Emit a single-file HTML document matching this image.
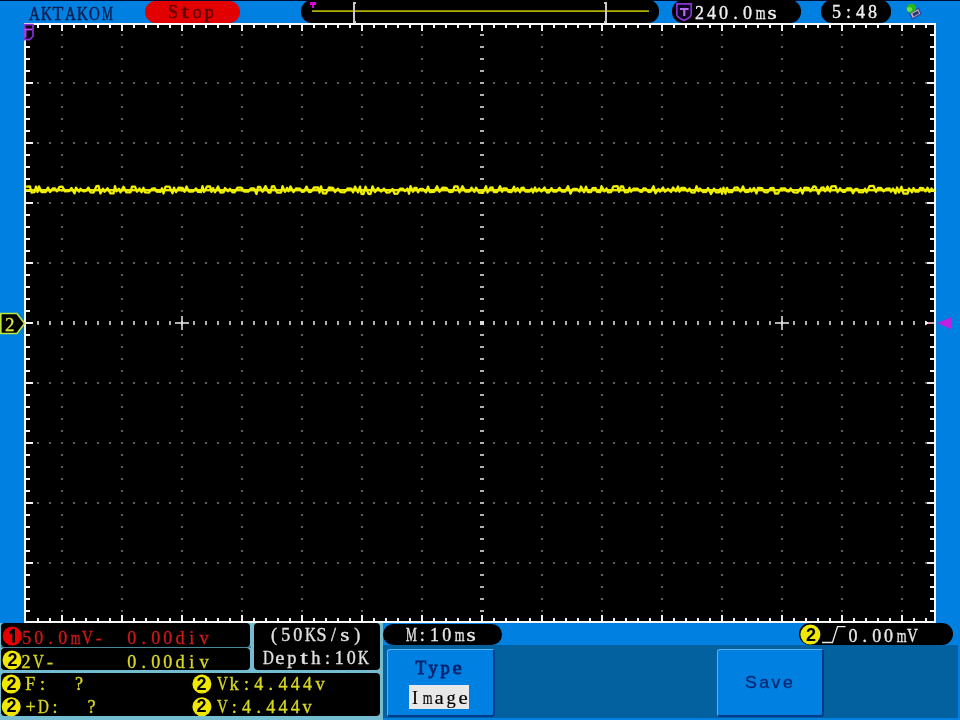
<!DOCTYPE html>
<html><head><meta charset="utf-8">
<style>
html,body{margin:0;padding:0}
body{width:960px;height:720px;overflow:hidden;background:#0080e0;position:relative;font-family:"Liberation Mono",monospace}
.a{position:absolute}
.t{position:absolute;white-space:pre;font-family:"Liberation Mono",monospace;font-size:19px;line-height:19px;letter-spacing:3px;transform:scaleX(0.85);transform-origin:0 0}
.tb{position:absolute;white-space:pre;font-family:"Liberation Mono",monospace;font-weight:bold;font-size:19px;line-height:19px;letter-spacing:0.6px}
.m{position:absolute;white-space:pre}
.m span{display:inline-block;text-align:center}
.pill{position:absolute;background:#000;border-radius:11px}
.box{position:absolute;background:#000;border-radius:4px}
.btn{position:absolute;background:#0080e0;border-top:1px solid #58b4f8;border-left:1px solid #58b4f8;border-right:2px solid #003c8c;border-bottom:2px solid #003c8c;border-radius:3px;box-sizing:border-box}
</style></head><body><div style="position:absolute;left:0;top:0;width:960px;height:720px;filter:blur(0.4px)">
<!-- top dark band -->
<div class="a" style="left:0;top:0;width:960px;height:1px;background:#000a30"></div>


<div class="pill" style="left:145px;top:1px;width:95px;height:22px;background:#e20000"></div>

<div class="pill" style="left:301px;top:0px;width:358px;height:23px"></div>
<svg class="a" style="left:0;top:0" width="960" height="24">
  <rect x="312" y="10.3" width="337" height="1.6" fill="#c0c000"/>
  <rect x="310" y="2" width="6" height="3" fill="#e000e0"/>
  <rect x="312" y="4" width="2" height="4" fill="#e000e0"/>
  <path d="M356 3 L354 3 L354 22 L356 22" stroke="#c8c8c8" stroke-width="2" fill="none"/>
  <path d="M604 3 L606 3 L606 22 L604 22" stroke="#c8c8c8" stroke-width="2" fill="none"/>
</svg>

<div class="pill" style="left:672px;top:0px;width:129px;height:23px"></div>
<svg class="a" style="left:672px;top:0" width="24" height="24">
  <path d="M4.8 3.8 H19.2 V14.5 Q19.2 17.3 12 20.6 Q4.8 17.3 4.8 14.5 Z" stroke="#8a34d8" stroke-width="1.7" fill="#100020"/>
  <rect x="8" y="8" width="8.6" height="2" fill="#b868f0"/>
  <rect x="11.2" y="8" width="2.2" height="8" fill="#b868f0"/>
</svg>

<div class="pill" style="left:821px;top:0px;width:70px;height:23px"></div>

<svg class="a" style="left:900px;top:0" width="30" height="24">
  <path d="M9.8 13.3 L18.5 8.3 L21 14 L12.3 18.8 Z" fill="#d0a8c8" stroke="#2848a0" stroke-width="1.3"/>
  <path d="M12.5 13.6 L17.8 10.8 L19 13.6 L13.6 16.4 Z" fill="#283c70"/>
  <path d="M6.5 8.5 C6.5 4.5 10 3.5 12 3.7 C15 3.9 16.3 6 16 8.5 C15.5 11 13 12 11.2 12.2 L11 14 L9.5 12.5 C7.5 12 6.5 10.5 6.5 8.5 Z" fill="#28b818"/>
  <ellipse cx="9.5" cy="9.3" rx="2.6" ry="2.4" fill="#70dc50"/>
</svg>

<!-- screen -->
<div class="a" style="left:24px;top:23px;width:908px;height:596px;border:2px solid #f8f8f8;background:#000"></div>
<svg class="a" style="left:0;top:0" width="960" height="640">
  <g fill="#5e5e5e"><rect x="61" y="34" width="2" height="2"/><rect x="61" y="46" width="2" height="2"/><rect x="61" y="58" width="2" height="2"/><rect x="61" y="70" width="2" height="2"/><rect x="61" y="82" width="2" height="2"/><rect x="61" y="94" width="2" height="2"/><rect x="61" y="106" width="2" height="2"/><rect x="61" y="118" width="2" height="2"/><rect x="61" y="130" width="2" height="2"/><rect x="61" y="142" width="2" height="2"/><rect x="61" y="154" width="2" height="2"/><rect x="61" y="166" width="2" height="2"/><rect x="61" y="178" width="2" height="2"/><rect x="61" y="190" width="2" height="2"/><rect x="61" y="202" width="2" height="2"/><rect x="61" y="214" width="2" height="2"/><rect x="61" y="226" width="2" height="2"/><rect x="61" y="238" width="2" height="2"/><rect x="61" y="250" width="2" height="2"/><rect x="61" y="262" width="2" height="2"/><rect x="61" y="274" width="2" height="2"/><rect x="61" y="286" width="2" height="2"/><rect x="61" y="298" width="2" height="2"/><rect x="61" y="310" width="2" height="2"/><rect x="61" y="322" width="2" height="2"/><rect x="61" y="334" width="2" height="2"/><rect x="61" y="346" width="2" height="2"/><rect x="61" y="358" width="2" height="2"/><rect x="61" y="370" width="2" height="2"/><rect x="61" y="382" width="2" height="2"/><rect x="61" y="394" width="2" height="2"/><rect x="61" y="406" width="2" height="2"/><rect x="61" y="418" width="2" height="2"/><rect x="61" y="430" width="2" height="2"/><rect x="61" y="442" width="2" height="2"/><rect x="61" y="454" width="2" height="2"/><rect x="61" y="466" width="2" height="2"/><rect x="61" y="478" width="2" height="2"/><rect x="61" y="490" width="2" height="2"/><rect x="61" y="502" width="2" height="2"/><rect x="61" y="514" width="2" height="2"/><rect x="61" y="526" width="2" height="2"/><rect x="61" y="538" width="2" height="2"/><rect x="61" y="550" width="2" height="2"/><rect x="61" y="562" width="2" height="2"/><rect x="61" y="574" width="2" height="2"/><rect x="61" y="586" width="2" height="2"/><rect x="61" y="598" width="2" height="2"/><rect x="61" y="610" width="2" height="2"/><rect x="121" y="34" width="2" height="2"/><rect x="121" y="46" width="2" height="2"/><rect x="121" y="58" width="2" height="2"/><rect x="121" y="70" width="2" height="2"/><rect x="121" y="82" width="2" height="2"/><rect x="121" y="94" width="2" height="2"/><rect x="121" y="106" width="2" height="2"/><rect x="121" y="118" width="2" height="2"/><rect x="121" y="130" width="2" height="2"/><rect x="121" y="142" width="2" height="2"/><rect x="121" y="154" width="2" height="2"/><rect x="121" y="166" width="2" height="2"/><rect x="121" y="178" width="2" height="2"/><rect x="121" y="190" width="2" height="2"/><rect x="121" y="202" width="2" height="2"/><rect x="121" y="214" width="2" height="2"/><rect x="121" y="226" width="2" height="2"/><rect x="121" y="238" width="2" height="2"/><rect x="121" y="250" width="2" height="2"/><rect x="121" y="262" width="2" height="2"/><rect x="121" y="274" width="2" height="2"/><rect x="121" y="286" width="2" height="2"/><rect x="121" y="298" width="2" height="2"/><rect x="121" y="310" width="2" height="2"/><rect x="121" y="322" width="2" height="2"/><rect x="121" y="334" width="2" height="2"/><rect x="121" y="346" width="2" height="2"/><rect x="121" y="358" width="2" height="2"/><rect x="121" y="370" width="2" height="2"/><rect x="121" y="382" width="2" height="2"/><rect x="121" y="394" width="2" height="2"/><rect x="121" y="406" width="2" height="2"/><rect x="121" y="418" width="2" height="2"/><rect x="121" y="430" width="2" height="2"/><rect x="121" y="442" width="2" height="2"/><rect x="121" y="454" width="2" height="2"/><rect x="121" y="466" width="2" height="2"/><rect x="121" y="478" width="2" height="2"/><rect x="121" y="490" width="2" height="2"/><rect x="121" y="502" width="2" height="2"/><rect x="121" y="514" width="2" height="2"/><rect x="121" y="526" width="2" height="2"/><rect x="121" y="538" width="2" height="2"/><rect x="121" y="550" width="2" height="2"/><rect x="121" y="562" width="2" height="2"/><rect x="121" y="574" width="2" height="2"/><rect x="121" y="586" width="2" height="2"/><rect x="121" y="598" width="2" height="2"/><rect x="121" y="610" width="2" height="2"/><rect x="181" y="34" width="2" height="2"/><rect x="181" y="46" width="2" height="2"/><rect x="181" y="58" width="2" height="2"/><rect x="181" y="70" width="2" height="2"/><rect x="181" y="82" width="2" height="2"/><rect x="181" y="94" width="2" height="2"/><rect x="181" y="106" width="2" height="2"/><rect x="181" y="118" width="2" height="2"/><rect x="181" y="130" width="2" height="2"/><rect x="181" y="142" width="2" height="2"/><rect x="181" y="154" width="2" height="2"/><rect x="181" y="166" width="2" height="2"/><rect x="181" y="178" width="2" height="2"/><rect x="181" y="190" width="2" height="2"/><rect x="181" y="202" width="2" height="2"/><rect x="181" y="214" width="2" height="2"/><rect x="181" y="226" width="2" height="2"/><rect x="181" y="238" width="2" height="2"/><rect x="181" y="250" width="2" height="2"/><rect x="181" y="262" width="2" height="2"/><rect x="181" y="274" width="2" height="2"/><rect x="181" y="286" width="2" height="2"/><rect x="181" y="298" width="2" height="2"/><rect x="181" y="310" width="2" height="2"/><rect x="181" y="322" width="2" height="2"/><rect x="181" y="334" width="2" height="2"/><rect x="181" y="346" width="2" height="2"/><rect x="181" y="358" width="2" height="2"/><rect x="181" y="370" width="2" height="2"/><rect x="181" y="382" width="2" height="2"/><rect x="181" y="394" width="2" height="2"/><rect x="181" y="406" width="2" height="2"/><rect x="181" y="418" width="2" height="2"/><rect x="181" y="430" width="2" height="2"/><rect x="181" y="442" width="2" height="2"/><rect x="181" y="454" width="2" height="2"/><rect x="181" y="466" width="2" height="2"/><rect x="181" y="478" width="2" height="2"/><rect x="181" y="490" width="2" height="2"/><rect x="181" y="502" width="2" height="2"/><rect x="181" y="514" width="2" height="2"/><rect x="181" y="526" width="2" height="2"/><rect x="181" y="538" width="2" height="2"/><rect x="181" y="550" width="2" height="2"/><rect x="181" y="562" width="2" height="2"/><rect x="181" y="574" width="2" height="2"/><rect x="181" y="586" width="2" height="2"/><rect x="181" y="598" width="2" height="2"/><rect x="181" y="610" width="2" height="2"/><rect x="241" y="34" width="2" height="2"/><rect x="241" y="46" width="2" height="2"/><rect x="241" y="58" width="2" height="2"/><rect x="241" y="70" width="2" height="2"/><rect x="241" y="82" width="2" height="2"/><rect x="241" y="94" width="2" height="2"/><rect x="241" y="106" width="2" height="2"/><rect x="241" y="118" width="2" height="2"/><rect x="241" y="130" width="2" height="2"/><rect x="241" y="142" width="2" height="2"/><rect x="241" y="154" width="2" height="2"/><rect x="241" y="166" width="2" height="2"/><rect x="241" y="178" width="2" height="2"/><rect x="241" y="190" width="2" height="2"/><rect x="241" y="202" width="2" height="2"/><rect x="241" y="214" width="2" height="2"/><rect x="241" y="226" width="2" height="2"/><rect x="241" y="238" width="2" height="2"/><rect x="241" y="250" width="2" height="2"/><rect x="241" y="262" width="2" height="2"/><rect x="241" y="274" width="2" height="2"/><rect x="241" y="286" width="2" height="2"/><rect x="241" y="298" width="2" height="2"/><rect x="241" y="310" width="2" height="2"/><rect x="241" y="322" width="2" height="2"/><rect x="241" y="334" width="2" height="2"/><rect x="241" y="346" width="2" height="2"/><rect x="241" y="358" width="2" height="2"/><rect x="241" y="370" width="2" height="2"/><rect x="241" y="382" width="2" height="2"/><rect x="241" y="394" width="2" height="2"/><rect x="241" y="406" width="2" height="2"/><rect x="241" y="418" width="2" height="2"/><rect x="241" y="430" width="2" height="2"/><rect x="241" y="442" width="2" height="2"/><rect x="241" y="454" width="2" height="2"/><rect x="241" y="466" width="2" height="2"/><rect x="241" y="478" width="2" height="2"/><rect x="241" y="490" width="2" height="2"/><rect x="241" y="502" width="2" height="2"/><rect x="241" y="514" width="2" height="2"/><rect x="241" y="526" width="2" height="2"/><rect x="241" y="538" width="2" height="2"/><rect x="241" y="550" width="2" height="2"/><rect x="241" y="562" width="2" height="2"/><rect x="241" y="574" width="2" height="2"/><rect x="241" y="586" width="2" height="2"/><rect x="241" y="598" width="2" height="2"/><rect x="241" y="610" width="2" height="2"/><rect x="301" y="34" width="2" height="2"/><rect x="301" y="46" width="2" height="2"/><rect x="301" y="58" width="2" height="2"/><rect x="301" y="70" width="2" height="2"/><rect x="301" y="82" width="2" height="2"/><rect x="301" y="94" width="2" height="2"/><rect x="301" y="106" width="2" height="2"/><rect x="301" y="118" width="2" height="2"/><rect x="301" y="130" width="2" height="2"/><rect x="301" y="142" width="2" height="2"/><rect x="301" y="154" width="2" height="2"/><rect x="301" y="166" width="2" height="2"/><rect x="301" y="178" width="2" height="2"/><rect x="301" y="190" width="2" height="2"/><rect x="301" y="202" width="2" height="2"/><rect x="301" y="214" width="2" height="2"/><rect x="301" y="226" width="2" height="2"/><rect x="301" y="238" width="2" height="2"/><rect x="301" y="250" width="2" height="2"/><rect x="301" y="262" width="2" height="2"/><rect x="301" y="274" width="2" height="2"/><rect x="301" y="286" width="2" height="2"/><rect x="301" y="298" width="2" height="2"/><rect x="301" y="310" width="2" height="2"/><rect x="301" y="322" width="2" height="2"/><rect x="301" y="334" width="2" height="2"/><rect x="301" y="346" width="2" height="2"/><rect x="301" y="358" width="2" height="2"/><rect x="301" y="370" width="2" height="2"/><rect x="301" y="382" width="2" height="2"/><rect x="301" y="394" width="2" height="2"/><rect x="301" y="406" width="2" height="2"/><rect x="301" y="418" width="2" height="2"/><rect x="301" y="430" width="2" height="2"/><rect x="301" y="442" width="2" height="2"/><rect x="301" y="454" width="2" height="2"/><rect x="301" y="466" width="2" height="2"/><rect x="301" y="478" width="2" height="2"/><rect x="301" y="490" width="2" height="2"/><rect x="301" y="502" width="2" height="2"/><rect x="301" y="514" width="2" height="2"/><rect x="301" y="526" width="2" height="2"/><rect x="301" y="538" width="2" height="2"/><rect x="301" y="550" width="2" height="2"/><rect x="301" y="562" width="2" height="2"/><rect x="301" y="574" width="2" height="2"/><rect x="301" y="586" width="2" height="2"/><rect x="301" y="598" width="2" height="2"/><rect x="301" y="610" width="2" height="2"/><rect x="361" y="34" width="2" height="2"/><rect x="361" y="46" width="2" height="2"/><rect x="361" y="58" width="2" height="2"/><rect x="361" y="70" width="2" height="2"/><rect x="361" y="82" width="2" height="2"/><rect x="361" y="94" width="2" height="2"/><rect x="361" y="106" width="2" height="2"/><rect x="361" y="118" width="2" height="2"/><rect x="361" y="130" width="2" height="2"/><rect x="361" y="142" width="2" height="2"/><rect x="361" y="154" width="2" height="2"/><rect x="361" y="166" width="2" height="2"/><rect x="361" y="178" width="2" height="2"/><rect x="361" y="190" width="2" height="2"/><rect x="361" y="202" width="2" height="2"/><rect x="361" y="214" width="2" height="2"/><rect x="361" y="226" width="2" height="2"/><rect x="361" y="238" width="2" height="2"/><rect x="361" y="250" width="2" height="2"/><rect x="361" y="262" width="2" height="2"/><rect x="361" y="274" width="2" height="2"/><rect x="361" y="286" width="2" height="2"/><rect x="361" y="298" width="2" height="2"/><rect x="361" y="310" width="2" height="2"/><rect x="361" y="322" width="2" height="2"/><rect x="361" y="334" width="2" height="2"/><rect x="361" y="346" width="2" height="2"/><rect x="361" y="358" width="2" height="2"/><rect x="361" y="370" width="2" height="2"/><rect x="361" y="382" width="2" height="2"/><rect x="361" y="394" width="2" height="2"/><rect x="361" y="406" width="2" height="2"/><rect x="361" y="418" width="2" height="2"/><rect x="361" y="430" width="2" height="2"/><rect x="361" y="442" width="2" height="2"/><rect x="361" y="454" width="2" height="2"/><rect x="361" y="466" width="2" height="2"/><rect x="361" y="478" width="2" height="2"/><rect x="361" y="490" width="2" height="2"/><rect x="361" y="502" width="2" height="2"/><rect x="361" y="514" width="2" height="2"/><rect x="361" y="526" width="2" height="2"/><rect x="361" y="538" width="2" height="2"/><rect x="361" y="550" width="2" height="2"/><rect x="361" y="562" width="2" height="2"/><rect x="361" y="574" width="2" height="2"/><rect x="361" y="586" width="2" height="2"/><rect x="361" y="598" width="2" height="2"/><rect x="361" y="610" width="2" height="2"/><rect x="421" y="34" width="2" height="2"/><rect x="421" y="46" width="2" height="2"/><rect x="421" y="58" width="2" height="2"/><rect x="421" y="70" width="2" height="2"/><rect x="421" y="82" width="2" height="2"/><rect x="421" y="94" width="2" height="2"/><rect x="421" y="106" width="2" height="2"/><rect x="421" y="118" width="2" height="2"/><rect x="421" y="130" width="2" height="2"/><rect x="421" y="142" width="2" height="2"/><rect x="421" y="154" width="2" height="2"/><rect x="421" y="166" width="2" height="2"/><rect x="421" y="178" width="2" height="2"/><rect x="421" y="190" width="2" height="2"/><rect x="421" y="202" width="2" height="2"/><rect x="421" y="214" width="2" height="2"/><rect x="421" y="226" width="2" height="2"/><rect x="421" y="238" width="2" height="2"/><rect x="421" y="250" width="2" height="2"/><rect x="421" y="262" width="2" height="2"/><rect x="421" y="274" width="2" height="2"/><rect x="421" y="286" width="2" height="2"/><rect x="421" y="298" width="2" height="2"/><rect x="421" y="310" width="2" height="2"/><rect x="421" y="322" width="2" height="2"/><rect x="421" y="334" width="2" height="2"/><rect x="421" y="346" width="2" height="2"/><rect x="421" y="358" width="2" height="2"/><rect x="421" y="370" width="2" height="2"/><rect x="421" y="382" width="2" height="2"/><rect x="421" y="394" width="2" height="2"/><rect x="421" y="406" width="2" height="2"/><rect x="421" y="418" width="2" height="2"/><rect x="421" y="430" width="2" height="2"/><rect x="421" y="442" width="2" height="2"/><rect x="421" y="454" width="2" height="2"/><rect x="421" y="466" width="2" height="2"/><rect x="421" y="478" width="2" height="2"/><rect x="421" y="490" width="2" height="2"/><rect x="421" y="502" width="2" height="2"/><rect x="421" y="514" width="2" height="2"/><rect x="421" y="526" width="2" height="2"/><rect x="421" y="538" width="2" height="2"/><rect x="421" y="550" width="2" height="2"/><rect x="421" y="562" width="2" height="2"/><rect x="421" y="574" width="2" height="2"/><rect x="421" y="586" width="2" height="2"/><rect x="421" y="598" width="2" height="2"/><rect x="421" y="610" width="2" height="2"/><rect x="541" y="34" width="2" height="2"/><rect x="541" y="46" width="2" height="2"/><rect x="541" y="58" width="2" height="2"/><rect x="541" y="70" width="2" height="2"/><rect x="541" y="82" width="2" height="2"/><rect x="541" y="94" width="2" height="2"/><rect x="541" y="106" width="2" height="2"/><rect x="541" y="118" width="2" height="2"/><rect x="541" y="130" width="2" height="2"/><rect x="541" y="142" width="2" height="2"/><rect x="541" y="154" width="2" height="2"/><rect x="541" y="166" width="2" height="2"/><rect x="541" y="178" width="2" height="2"/><rect x="541" y="190" width="2" height="2"/><rect x="541" y="202" width="2" height="2"/><rect x="541" y="214" width="2" height="2"/><rect x="541" y="226" width="2" height="2"/><rect x="541" y="238" width="2" height="2"/><rect x="541" y="250" width="2" height="2"/><rect x="541" y="262" width="2" height="2"/><rect x="541" y="274" width="2" height="2"/><rect x="541" y="286" width="2" height="2"/><rect x="541" y="298" width="2" height="2"/><rect x="541" y="310" width="2" height="2"/><rect x="541" y="322" width="2" height="2"/><rect x="541" y="334" width="2" height="2"/><rect x="541" y="346" width="2" height="2"/><rect x="541" y="358" width="2" height="2"/><rect x="541" y="370" width="2" height="2"/><rect x="541" y="382" width="2" height="2"/><rect x="541" y="394" width="2" height="2"/><rect x="541" y="406" width="2" height="2"/><rect x="541" y="418" width="2" height="2"/><rect x="541" y="430" width="2" height="2"/><rect x="541" y="442" width="2" height="2"/><rect x="541" y="454" width="2" height="2"/><rect x="541" y="466" width="2" height="2"/><rect x="541" y="478" width="2" height="2"/><rect x="541" y="490" width="2" height="2"/><rect x="541" y="502" width="2" height="2"/><rect x="541" y="514" width="2" height="2"/><rect x="541" y="526" width="2" height="2"/><rect x="541" y="538" width="2" height="2"/><rect x="541" y="550" width="2" height="2"/><rect x="541" y="562" width="2" height="2"/><rect x="541" y="574" width="2" height="2"/><rect x="541" y="586" width="2" height="2"/><rect x="541" y="598" width="2" height="2"/><rect x="541" y="610" width="2" height="2"/><rect x="601" y="34" width="2" height="2"/><rect x="601" y="46" width="2" height="2"/><rect x="601" y="58" width="2" height="2"/><rect x="601" y="70" width="2" height="2"/><rect x="601" y="82" width="2" height="2"/><rect x="601" y="94" width="2" height="2"/><rect x="601" y="106" width="2" height="2"/><rect x="601" y="118" width="2" height="2"/><rect x="601" y="130" width="2" height="2"/><rect x="601" y="142" width="2" height="2"/><rect x="601" y="154" width="2" height="2"/><rect x="601" y="166" width="2" height="2"/><rect x="601" y="178" width="2" height="2"/><rect x="601" y="190" width="2" height="2"/><rect x="601" y="202" width="2" height="2"/><rect x="601" y="214" width="2" height="2"/><rect x="601" y="226" width="2" height="2"/><rect x="601" y="238" width="2" height="2"/><rect x="601" y="250" width="2" height="2"/><rect x="601" y="262" width="2" height="2"/><rect x="601" y="274" width="2" height="2"/><rect x="601" y="286" width="2" height="2"/><rect x="601" y="298" width="2" height="2"/><rect x="601" y="310" width="2" height="2"/><rect x="601" y="322" width="2" height="2"/><rect x="601" y="334" width="2" height="2"/><rect x="601" y="346" width="2" height="2"/><rect x="601" y="358" width="2" height="2"/><rect x="601" y="370" width="2" height="2"/><rect x="601" y="382" width="2" height="2"/><rect x="601" y="394" width="2" height="2"/><rect x="601" y="406" width="2" height="2"/><rect x="601" y="418" width="2" height="2"/><rect x="601" y="430" width="2" height="2"/><rect x="601" y="442" width="2" height="2"/><rect x="601" y="454" width="2" height="2"/><rect x="601" y="466" width="2" height="2"/><rect x="601" y="478" width="2" height="2"/><rect x="601" y="490" width="2" height="2"/><rect x="601" y="502" width="2" height="2"/><rect x="601" y="514" width="2" height="2"/><rect x="601" y="526" width="2" height="2"/><rect x="601" y="538" width="2" height="2"/><rect x="601" y="550" width="2" height="2"/><rect x="601" y="562" width="2" height="2"/><rect x="601" y="574" width="2" height="2"/><rect x="601" y="586" width="2" height="2"/><rect x="601" y="598" width="2" height="2"/><rect x="601" y="610" width="2" height="2"/><rect x="661" y="34" width="2" height="2"/><rect x="661" y="46" width="2" height="2"/><rect x="661" y="58" width="2" height="2"/><rect x="661" y="70" width="2" height="2"/><rect x="661" y="82" width="2" height="2"/><rect x="661" y="94" width="2" height="2"/><rect x="661" y="106" width="2" height="2"/><rect x="661" y="118" width="2" height="2"/><rect x="661" y="130" width="2" height="2"/><rect x="661" y="142" width="2" height="2"/><rect x="661" y="154" width="2" height="2"/><rect x="661" y="166" width="2" height="2"/><rect x="661" y="178" width="2" height="2"/><rect x="661" y="190" width="2" height="2"/><rect x="661" y="202" width="2" height="2"/><rect x="661" y="214" width="2" height="2"/><rect x="661" y="226" width="2" height="2"/><rect x="661" y="238" width="2" height="2"/><rect x="661" y="250" width="2" height="2"/><rect x="661" y="262" width="2" height="2"/><rect x="661" y="274" width="2" height="2"/><rect x="661" y="286" width="2" height="2"/><rect x="661" y="298" width="2" height="2"/><rect x="661" y="310" width="2" height="2"/><rect x="661" y="322" width="2" height="2"/><rect x="661" y="334" width="2" height="2"/><rect x="661" y="346" width="2" height="2"/><rect x="661" y="358" width="2" height="2"/><rect x="661" y="370" width="2" height="2"/><rect x="661" y="382" width="2" height="2"/><rect x="661" y="394" width="2" height="2"/><rect x="661" y="406" width="2" height="2"/><rect x="661" y="418" width="2" height="2"/><rect x="661" y="430" width="2" height="2"/><rect x="661" y="442" width="2" height="2"/><rect x="661" y="454" width="2" height="2"/><rect x="661" y="466" width="2" height="2"/><rect x="661" y="478" width="2" height="2"/><rect x="661" y="490" width="2" height="2"/><rect x="661" y="502" width="2" height="2"/><rect x="661" y="514" width="2" height="2"/><rect x="661" y="526" width="2" height="2"/><rect x="661" y="538" width="2" height="2"/><rect x="661" y="550" width="2" height="2"/><rect x="661" y="562" width="2" height="2"/><rect x="661" y="574" width="2" height="2"/><rect x="661" y="586" width="2" height="2"/><rect x="661" y="598" width="2" height="2"/><rect x="661" y="610" width="2" height="2"/><rect x="721" y="34" width="2" height="2"/><rect x="721" y="46" width="2" height="2"/><rect x="721" y="58" width="2" height="2"/><rect x="721" y="70" width="2" height="2"/><rect x="721" y="82" width="2" height="2"/><rect x="721" y="94" width="2" height="2"/><rect x="721" y="106" width="2" height="2"/><rect x="721" y="118" width="2" height="2"/><rect x="721" y="130" width="2" height="2"/><rect x="721" y="142" width="2" height="2"/><rect x="721" y="154" width="2" height="2"/><rect x="721" y="166" width="2" height="2"/><rect x="721" y="178" width="2" height="2"/><rect x="721" y="190" width="2" height="2"/><rect x="721" y="202" width="2" height="2"/><rect x="721" y="214" width="2" height="2"/><rect x="721" y="226" width="2" height="2"/><rect x="721" y="238" width="2" height="2"/><rect x="721" y="250" width="2" height="2"/><rect x="721" y="262" width="2" height="2"/><rect x="721" y="274" width="2" height="2"/><rect x="721" y="286" width="2" height="2"/><rect x="721" y="298" width="2" height="2"/><rect x="721" y="310" width="2" height="2"/><rect x="721" y="322" width="2" height="2"/><rect x="721" y="334" width="2" height="2"/><rect x="721" y="346" width="2" height="2"/><rect x="721" y="358" width="2" height="2"/><rect x="721" y="370" width="2" height="2"/><rect x="721" y="382" width="2" height="2"/><rect x="721" y="394" width="2" height="2"/><rect x="721" y="406" width="2" height="2"/><rect x="721" y="418" width="2" height="2"/><rect x="721" y="430" width="2" height="2"/><rect x="721" y="442" width="2" height="2"/><rect x="721" y="454" width="2" height="2"/><rect x="721" y="466" width="2" height="2"/><rect x="721" y="478" width="2" height="2"/><rect x="721" y="490" width="2" height="2"/><rect x="721" y="502" width="2" height="2"/><rect x="721" y="514" width="2" height="2"/><rect x="721" y="526" width="2" height="2"/><rect x="721" y="538" width="2" height="2"/><rect x="721" y="550" width="2" height="2"/><rect x="721" y="562" width="2" height="2"/><rect x="721" y="574" width="2" height="2"/><rect x="721" y="586" width="2" height="2"/><rect x="721" y="598" width="2" height="2"/><rect x="721" y="610" width="2" height="2"/><rect x="781" y="34" width="2" height="2"/><rect x="781" y="46" width="2" height="2"/><rect x="781" y="58" width="2" height="2"/><rect x="781" y="70" width="2" height="2"/><rect x="781" y="82" width="2" height="2"/><rect x="781" y="94" width="2" height="2"/><rect x="781" y="106" width="2" height="2"/><rect x="781" y="118" width="2" height="2"/><rect x="781" y="130" width="2" height="2"/><rect x="781" y="142" width="2" height="2"/><rect x="781" y="154" width="2" height="2"/><rect x="781" y="166" width="2" height="2"/><rect x="781" y="178" width="2" height="2"/><rect x="781" y="190" width="2" height="2"/><rect x="781" y="202" width="2" height="2"/><rect x="781" y="214" width="2" height="2"/><rect x="781" y="226" width="2" height="2"/><rect x="781" y="238" width="2" height="2"/><rect x="781" y="250" width="2" height="2"/><rect x="781" y="262" width="2" height="2"/><rect x="781" y="274" width="2" height="2"/><rect x="781" y="286" width="2" height="2"/><rect x="781" y="298" width="2" height="2"/><rect x="781" y="310" width="2" height="2"/><rect x="781" y="322" width="2" height="2"/><rect x="781" y="334" width="2" height="2"/><rect x="781" y="346" width="2" height="2"/><rect x="781" y="358" width="2" height="2"/><rect x="781" y="370" width="2" height="2"/><rect x="781" y="382" width="2" height="2"/><rect x="781" y="394" width="2" height="2"/><rect x="781" y="406" width="2" height="2"/><rect x="781" y="418" width="2" height="2"/><rect x="781" y="430" width="2" height="2"/><rect x="781" y="442" width="2" height="2"/><rect x="781" y="454" width="2" height="2"/><rect x="781" y="466" width="2" height="2"/><rect x="781" y="478" width="2" height="2"/><rect x="781" y="490" width="2" height="2"/><rect x="781" y="502" width="2" height="2"/><rect x="781" y="514" width="2" height="2"/><rect x="781" y="526" width="2" height="2"/><rect x="781" y="538" width="2" height="2"/><rect x="781" y="550" width="2" height="2"/><rect x="781" y="562" width="2" height="2"/><rect x="781" y="574" width="2" height="2"/><rect x="781" y="586" width="2" height="2"/><rect x="781" y="598" width="2" height="2"/><rect x="781" y="610" width="2" height="2"/><rect x="841" y="34" width="2" height="2"/><rect x="841" y="46" width="2" height="2"/><rect x="841" y="58" width="2" height="2"/><rect x="841" y="70" width="2" height="2"/><rect x="841" y="82" width="2" height="2"/><rect x="841" y="94" width="2" height="2"/><rect x="841" y="106" width="2" height="2"/><rect x="841" y="118" width="2" height="2"/><rect x="841" y="130" width="2" height="2"/><rect x="841" y="142" width="2" height="2"/><rect x="841" y="154" width="2" height="2"/><rect x="841" y="166" width="2" height="2"/><rect x="841" y="178" width="2" height="2"/><rect x="841" y="190" width="2" height="2"/><rect x="841" y="202" width="2" height="2"/><rect x="841" y="214" width="2" height="2"/><rect x="841" y="226" width="2" height="2"/><rect x="841" y="238" width="2" height="2"/><rect x="841" y="250" width="2" height="2"/><rect x="841" y="262" width="2" height="2"/><rect x="841" y="274" width="2" height="2"/><rect x="841" y="286" width="2" height="2"/><rect x="841" y="298" width="2" height="2"/><rect x="841" y="310" width="2" height="2"/><rect x="841" y="322" width="2" height="2"/><rect x="841" y="334" width="2" height="2"/><rect x="841" y="346" width="2" height="2"/><rect x="841" y="358" width="2" height="2"/><rect x="841" y="370" width="2" height="2"/><rect x="841" y="382" width="2" height="2"/><rect x="841" y="394" width="2" height="2"/><rect x="841" y="406" width="2" height="2"/><rect x="841" y="418" width="2" height="2"/><rect x="841" y="430" width="2" height="2"/><rect x="841" y="442" width="2" height="2"/><rect x="841" y="454" width="2" height="2"/><rect x="841" y="466" width="2" height="2"/><rect x="841" y="478" width="2" height="2"/><rect x="841" y="490" width="2" height="2"/><rect x="841" y="502" width="2" height="2"/><rect x="841" y="514" width="2" height="2"/><rect x="841" y="526" width="2" height="2"/><rect x="841" y="538" width="2" height="2"/><rect x="841" y="550" width="2" height="2"/><rect x="841" y="562" width="2" height="2"/><rect x="841" y="574" width="2" height="2"/><rect x="841" y="586" width="2" height="2"/><rect x="841" y="598" width="2" height="2"/><rect x="841" y="610" width="2" height="2"/><rect x="901" y="34" width="2" height="2"/><rect x="901" y="46" width="2" height="2"/><rect x="901" y="58" width="2" height="2"/><rect x="901" y="70" width="2" height="2"/><rect x="901" y="82" width="2" height="2"/><rect x="901" y="94" width="2" height="2"/><rect x="901" y="106" width="2" height="2"/><rect x="901" y="118" width="2" height="2"/><rect x="901" y="130" width="2" height="2"/><rect x="901" y="142" width="2" height="2"/><rect x="901" y="154" width="2" height="2"/><rect x="901" y="166" width="2" height="2"/><rect x="901" y="178" width="2" height="2"/><rect x="901" y="190" width="2" height="2"/><rect x="901" y="202" width="2" height="2"/><rect x="901" y="214" width="2" height="2"/><rect x="901" y="226" width="2" height="2"/><rect x="901" y="238" width="2" height="2"/><rect x="901" y="250" width="2" height="2"/><rect x="901" y="262" width="2" height="2"/><rect x="901" y="274" width="2" height="2"/><rect x="901" y="286" width="2" height="2"/><rect x="901" y="298" width="2" height="2"/><rect x="901" y="310" width="2" height="2"/><rect x="901" y="322" width="2" height="2"/><rect x="901" y="334" width="2" height="2"/><rect x="901" y="346" width="2" height="2"/><rect x="901" y="358" width="2" height="2"/><rect x="901" y="370" width="2" height="2"/><rect x="901" y="382" width="2" height="2"/><rect x="901" y="394" width="2" height="2"/><rect x="901" y="406" width="2" height="2"/><rect x="901" y="418" width="2" height="2"/><rect x="901" y="430" width="2" height="2"/><rect x="901" y="442" width="2" height="2"/><rect x="901" y="454" width="2" height="2"/><rect x="901" y="466" width="2" height="2"/><rect x="901" y="478" width="2" height="2"/><rect x="901" y="490" width="2" height="2"/><rect x="901" y="502" width="2" height="2"/><rect x="901" y="514" width="2" height="2"/><rect x="901" y="526" width="2" height="2"/><rect x="901" y="538" width="2" height="2"/><rect x="901" y="550" width="2" height="2"/><rect x="901" y="562" width="2" height="2"/><rect x="901" y="574" width="2" height="2"/><rect x="901" y="586" width="2" height="2"/><rect x="901" y="598" width="2" height="2"/><rect x="901" y="610" width="2" height="2"/><rect x="37" y="82" width="2" height="2"/><rect x="49" y="82" width="2" height="2"/><rect x="73" y="82" width="2" height="2"/><rect x="85" y="82" width="2" height="2"/><rect x="97" y="82" width="2" height="2"/><rect x="109" y="82" width="2" height="2"/><rect x="133" y="82" width="2" height="2"/><rect x="145" y="82" width="2" height="2"/><rect x="157" y="82" width="2" height="2"/><rect x="169" y="82" width="2" height="2"/><rect x="193" y="82" width="2" height="2"/><rect x="205" y="82" width="2" height="2"/><rect x="217" y="82" width="2" height="2"/><rect x="229" y="82" width="2" height="2"/><rect x="253" y="82" width="2" height="2"/><rect x="265" y="82" width="2" height="2"/><rect x="277" y="82" width="2" height="2"/><rect x="289" y="82" width="2" height="2"/><rect x="313" y="82" width="2" height="2"/><rect x="325" y="82" width="2" height="2"/><rect x="337" y="82" width="2" height="2"/><rect x="349" y="82" width="2" height="2"/><rect x="373" y="82" width="2" height="2"/><rect x="385" y="82" width="2" height="2"/><rect x="397" y="82" width="2" height="2"/><rect x="409" y="82" width="2" height="2"/><rect x="433" y="82" width="2" height="2"/><rect x="445" y="82" width="2" height="2"/><rect x="457" y="82" width="2" height="2"/><rect x="469" y="82" width="2" height="2"/><rect x="493" y="82" width="2" height="2"/><rect x="505" y="82" width="2" height="2"/><rect x="517" y="82" width="2" height="2"/><rect x="529" y="82" width="2" height="2"/><rect x="553" y="82" width="2" height="2"/><rect x="565" y="82" width="2" height="2"/><rect x="577" y="82" width="2" height="2"/><rect x="589" y="82" width="2" height="2"/><rect x="613" y="82" width="2" height="2"/><rect x="625" y="82" width="2" height="2"/><rect x="637" y="82" width="2" height="2"/><rect x="649" y="82" width="2" height="2"/><rect x="673" y="82" width="2" height="2"/><rect x="685" y="82" width="2" height="2"/><rect x="697" y="82" width="2" height="2"/><rect x="709" y="82" width="2" height="2"/><rect x="733" y="82" width="2" height="2"/><rect x="745" y="82" width="2" height="2"/><rect x="757" y="82" width="2" height="2"/><rect x="769" y="82" width="2" height="2"/><rect x="793" y="82" width="2" height="2"/><rect x="805" y="82" width="2" height="2"/><rect x="817" y="82" width="2" height="2"/><rect x="829" y="82" width="2" height="2"/><rect x="853" y="82" width="2" height="2"/><rect x="865" y="82" width="2" height="2"/><rect x="877" y="82" width="2" height="2"/><rect x="889" y="82" width="2" height="2"/><rect x="913" y="82" width="2" height="2"/><rect x="925" y="82" width="2" height="2"/><rect x="37" y="142" width="2" height="2"/><rect x="49" y="142" width="2" height="2"/><rect x="73" y="142" width="2" height="2"/><rect x="85" y="142" width="2" height="2"/><rect x="97" y="142" width="2" height="2"/><rect x="109" y="142" width="2" height="2"/><rect x="133" y="142" width="2" height="2"/><rect x="145" y="142" width="2" height="2"/><rect x="157" y="142" width="2" height="2"/><rect x="169" y="142" width="2" height="2"/><rect x="193" y="142" width="2" height="2"/><rect x="205" y="142" width="2" height="2"/><rect x="217" y="142" width="2" height="2"/><rect x="229" y="142" width="2" height="2"/><rect x="253" y="142" width="2" height="2"/><rect x="265" y="142" width="2" height="2"/><rect x="277" y="142" width="2" height="2"/><rect x="289" y="142" width="2" height="2"/><rect x="313" y="142" width="2" height="2"/><rect x="325" y="142" width="2" height="2"/><rect x="337" y="142" width="2" height="2"/><rect x="349" y="142" width="2" height="2"/><rect x="373" y="142" width="2" height="2"/><rect x="385" y="142" width="2" height="2"/><rect x="397" y="142" width="2" height="2"/><rect x="409" y="142" width="2" height="2"/><rect x="433" y="142" width="2" height="2"/><rect x="445" y="142" width="2" height="2"/><rect x="457" y="142" width="2" height="2"/><rect x="469" y="142" width="2" height="2"/><rect x="493" y="142" width="2" height="2"/><rect x="505" y="142" width="2" height="2"/><rect x="517" y="142" width="2" height="2"/><rect x="529" y="142" width="2" height="2"/><rect x="553" y="142" width="2" height="2"/><rect x="565" y="142" width="2" height="2"/><rect x="577" y="142" width="2" height="2"/><rect x="589" y="142" width="2" height="2"/><rect x="613" y="142" width="2" height="2"/><rect x="625" y="142" width="2" height="2"/><rect x="637" y="142" width="2" height="2"/><rect x="649" y="142" width="2" height="2"/><rect x="673" y="142" width="2" height="2"/><rect x="685" y="142" width="2" height="2"/><rect x="697" y="142" width="2" height="2"/><rect x="709" y="142" width="2" height="2"/><rect x="733" y="142" width="2" height="2"/><rect x="745" y="142" width="2" height="2"/><rect x="757" y="142" width="2" height="2"/><rect x="769" y="142" width="2" height="2"/><rect x="793" y="142" width="2" height="2"/><rect x="805" y="142" width="2" height="2"/><rect x="817" y="142" width="2" height="2"/><rect x="829" y="142" width="2" height="2"/><rect x="853" y="142" width="2" height="2"/><rect x="865" y="142" width="2" height="2"/><rect x="877" y="142" width="2" height="2"/><rect x="889" y="142" width="2" height="2"/><rect x="913" y="142" width="2" height="2"/><rect x="925" y="142" width="2" height="2"/><rect x="37" y="202" width="2" height="2"/><rect x="49" y="202" width="2" height="2"/><rect x="73" y="202" width="2" height="2"/><rect x="85" y="202" width="2" height="2"/><rect x="97" y="202" width="2" height="2"/><rect x="109" y="202" width="2" height="2"/><rect x="133" y="202" width="2" height="2"/><rect x="145" y="202" width="2" height="2"/><rect x="157" y="202" width="2" height="2"/><rect x="169" y="202" width="2" height="2"/><rect x="193" y="202" width="2" height="2"/><rect x="205" y="202" width="2" height="2"/><rect x="217" y="202" width="2" height="2"/><rect x="229" y="202" width="2" height="2"/><rect x="253" y="202" width="2" height="2"/><rect x="265" y="202" width="2" height="2"/><rect x="277" y="202" width="2" height="2"/><rect x="289" y="202" width="2" height="2"/><rect x="313" y="202" width="2" height="2"/><rect x="325" y="202" width="2" height="2"/><rect x="337" y="202" width="2" height="2"/><rect x="349" y="202" width="2" height="2"/><rect x="373" y="202" width="2" height="2"/><rect x="385" y="202" width="2" height="2"/><rect x="397" y="202" width="2" height="2"/><rect x="409" y="202" width="2" height="2"/><rect x="433" y="202" width="2" height="2"/><rect x="445" y="202" width="2" height="2"/><rect x="457" y="202" width="2" height="2"/><rect x="469" y="202" width="2" height="2"/><rect x="493" y="202" width="2" height="2"/><rect x="505" y="202" width="2" height="2"/><rect x="517" y="202" width="2" height="2"/><rect x="529" y="202" width="2" height="2"/><rect x="553" y="202" width="2" height="2"/><rect x="565" y="202" width="2" height="2"/><rect x="577" y="202" width="2" height="2"/><rect x="589" y="202" width="2" height="2"/><rect x="613" y="202" width="2" height="2"/><rect x="625" y="202" width="2" height="2"/><rect x="637" y="202" width="2" height="2"/><rect x="649" y="202" width="2" height="2"/><rect x="673" y="202" width="2" height="2"/><rect x="685" y="202" width="2" height="2"/><rect x="697" y="202" width="2" height="2"/><rect x="709" y="202" width="2" height="2"/><rect x="733" y="202" width="2" height="2"/><rect x="745" y="202" width="2" height="2"/><rect x="757" y="202" width="2" height="2"/><rect x="769" y="202" width="2" height="2"/><rect x="793" y="202" width="2" height="2"/><rect x="805" y="202" width="2" height="2"/><rect x="817" y="202" width="2" height="2"/><rect x="829" y="202" width="2" height="2"/><rect x="853" y="202" width="2" height="2"/><rect x="865" y="202" width="2" height="2"/><rect x="877" y="202" width="2" height="2"/><rect x="889" y="202" width="2" height="2"/><rect x="913" y="202" width="2" height="2"/><rect x="925" y="202" width="2" height="2"/><rect x="37" y="262" width="2" height="2"/><rect x="49" y="262" width="2" height="2"/><rect x="73" y="262" width="2" height="2"/><rect x="85" y="262" width="2" height="2"/><rect x="97" y="262" width="2" height="2"/><rect x="109" y="262" width="2" height="2"/><rect x="133" y="262" width="2" height="2"/><rect x="145" y="262" width="2" height="2"/><rect x="157" y="262" width="2" height="2"/><rect x="169" y="262" width="2" height="2"/><rect x="193" y="262" width="2" height="2"/><rect x="205" y="262" width="2" height="2"/><rect x="217" y="262" width="2" height="2"/><rect x="229" y="262" width="2" height="2"/><rect x="253" y="262" width="2" height="2"/><rect x="265" y="262" width="2" height="2"/><rect x="277" y="262" width="2" height="2"/><rect x="289" y="262" width="2" height="2"/><rect x="313" y="262" width="2" height="2"/><rect x="325" y="262" width="2" height="2"/><rect x="337" y="262" width="2" height="2"/><rect x="349" y="262" width="2" height="2"/><rect x="373" y="262" width="2" height="2"/><rect x="385" y="262" width="2" height="2"/><rect x="397" y="262" width="2" height="2"/><rect x="409" y="262" width="2" height="2"/><rect x="433" y="262" width="2" height="2"/><rect x="445" y="262" width="2" height="2"/><rect x="457" y="262" width="2" height="2"/><rect x="469" y="262" width="2" height="2"/><rect x="493" y="262" width="2" height="2"/><rect x="505" y="262" width="2" height="2"/><rect x="517" y="262" width="2" height="2"/><rect x="529" y="262" width="2" height="2"/><rect x="553" y="262" width="2" height="2"/><rect x="565" y="262" width="2" height="2"/><rect x="577" y="262" width="2" height="2"/><rect x="589" y="262" width="2" height="2"/><rect x="613" y="262" width="2" height="2"/><rect x="625" y="262" width="2" height="2"/><rect x="637" y="262" width="2" height="2"/><rect x="649" y="262" width="2" height="2"/><rect x="673" y="262" width="2" height="2"/><rect x="685" y="262" width="2" height="2"/><rect x="697" y="262" width="2" height="2"/><rect x="709" y="262" width="2" height="2"/><rect x="733" y="262" width="2" height="2"/><rect x="745" y="262" width="2" height="2"/><rect x="757" y="262" width="2" height="2"/><rect x="769" y="262" width="2" height="2"/><rect x="793" y="262" width="2" height="2"/><rect x="805" y="262" width="2" height="2"/><rect x="817" y="262" width="2" height="2"/><rect x="829" y="262" width="2" height="2"/><rect x="853" y="262" width="2" height="2"/><rect x="865" y="262" width="2" height="2"/><rect x="877" y="262" width="2" height="2"/><rect x="889" y="262" width="2" height="2"/><rect x="913" y="262" width="2" height="2"/><rect x="925" y="262" width="2" height="2"/><rect x="37" y="382" width="2" height="2"/><rect x="49" y="382" width="2" height="2"/><rect x="73" y="382" width="2" height="2"/><rect x="85" y="382" width="2" height="2"/><rect x="97" y="382" width="2" height="2"/><rect x="109" y="382" width="2" height="2"/><rect x="133" y="382" width="2" height="2"/><rect x="145" y="382" width="2" height="2"/><rect x="157" y="382" width="2" height="2"/><rect x="169" y="382" width="2" height="2"/><rect x="193" y="382" width="2" height="2"/><rect x="205" y="382" width="2" height="2"/><rect x="217" y="382" width="2" height="2"/><rect x="229" y="382" width="2" height="2"/><rect x="253" y="382" width="2" height="2"/><rect x="265" y="382" width="2" height="2"/><rect x="277" y="382" width="2" height="2"/><rect x="289" y="382" width="2" height="2"/><rect x="313" y="382" width="2" height="2"/><rect x="325" y="382" width="2" height="2"/><rect x="337" y="382" width="2" height="2"/><rect x="349" y="382" width="2" height="2"/><rect x="373" y="382" width="2" height="2"/><rect x="385" y="382" width="2" height="2"/><rect x="397" y="382" width="2" height="2"/><rect x="409" y="382" width="2" height="2"/><rect x="433" y="382" width="2" height="2"/><rect x="445" y="382" width="2" height="2"/><rect x="457" y="382" width="2" height="2"/><rect x="469" y="382" width="2" height="2"/><rect x="493" y="382" width="2" height="2"/><rect x="505" y="382" width="2" height="2"/><rect x="517" y="382" width="2" height="2"/><rect x="529" y="382" width="2" height="2"/><rect x="553" y="382" width="2" height="2"/><rect x="565" y="382" width="2" height="2"/><rect x="577" y="382" width="2" height="2"/><rect x="589" y="382" width="2" height="2"/><rect x="613" y="382" width="2" height="2"/><rect x="625" y="382" width="2" height="2"/><rect x="637" y="382" width="2" height="2"/><rect x="649" y="382" width="2" height="2"/><rect x="673" y="382" width="2" height="2"/><rect x="685" y="382" width="2" height="2"/><rect x="697" y="382" width="2" height="2"/><rect x="709" y="382" width="2" height="2"/><rect x="733" y="382" width="2" height="2"/><rect x="745" y="382" width="2" height="2"/><rect x="757" y="382" width="2" height="2"/><rect x="769" y="382" width="2" height="2"/><rect x="793" y="382" width="2" height="2"/><rect x="805" y="382" width="2" height="2"/><rect x="817" y="382" width="2" height="2"/><rect x="829" y="382" width="2" height="2"/><rect x="853" y="382" width="2" height="2"/><rect x="865" y="382" width="2" height="2"/><rect x="877" y="382" width="2" height="2"/><rect x="889" y="382" width="2" height="2"/><rect x="913" y="382" width="2" height="2"/><rect x="925" y="382" width="2" height="2"/><rect x="37" y="442" width="2" height="2"/><rect x="49" y="442" width="2" height="2"/><rect x="73" y="442" width="2" height="2"/><rect x="85" y="442" width="2" height="2"/><rect x="97" y="442" width="2" height="2"/><rect x="109" y="442" width="2" height="2"/><rect x="133" y="442" width="2" height="2"/><rect x="145" y="442" width="2" height="2"/><rect x="157" y="442" width="2" height="2"/><rect x="169" y="442" width="2" height="2"/><rect x="193" y="442" width="2" height="2"/><rect x="205" y="442" width="2" height="2"/><rect x="217" y="442" width="2" height="2"/><rect x="229" y="442" width="2" height="2"/><rect x="253" y="442" width="2" height="2"/><rect x="265" y="442" width="2" height="2"/><rect x="277" y="442" width="2" height="2"/><rect x="289" y="442" width="2" height="2"/><rect x="313" y="442" width="2" height="2"/><rect x="325" y="442" width="2" height="2"/><rect x="337" y="442" width="2" height="2"/><rect x="349" y="442" width="2" height="2"/><rect x="373" y="442" width="2" height="2"/><rect x="385" y="442" width="2" height="2"/><rect x="397" y="442" width="2" height="2"/><rect x="409" y="442" width="2" height="2"/><rect x="433" y="442" width="2" height="2"/><rect x="445" y="442" width="2" height="2"/><rect x="457" y="442" width="2" height="2"/><rect x="469" y="442" width="2" height="2"/><rect x="493" y="442" width="2" height="2"/><rect x="505" y="442" width="2" height="2"/><rect x="517" y="442" width="2" height="2"/><rect x="529" y="442" width="2" height="2"/><rect x="553" y="442" width="2" height="2"/><rect x="565" y="442" width="2" height="2"/><rect x="577" y="442" width="2" height="2"/><rect x="589" y="442" width="2" height="2"/><rect x="613" y="442" width="2" height="2"/><rect x="625" y="442" width="2" height="2"/><rect x="637" y="442" width="2" height="2"/><rect x="649" y="442" width="2" height="2"/><rect x="673" y="442" width="2" height="2"/><rect x="685" y="442" width="2" height="2"/><rect x="697" y="442" width="2" height="2"/><rect x="709" y="442" width="2" height="2"/><rect x="733" y="442" width="2" height="2"/><rect x="745" y="442" width="2" height="2"/><rect x="757" y="442" width="2" height="2"/><rect x="769" y="442" width="2" height="2"/><rect x="793" y="442" width="2" height="2"/><rect x="805" y="442" width="2" height="2"/><rect x="817" y="442" width="2" height="2"/><rect x="829" y="442" width="2" height="2"/><rect x="853" y="442" width="2" height="2"/><rect x="865" y="442" width="2" height="2"/><rect x="877" y="442" width="2" height="2"/><rect x="889" y="442" width="2" height="2"/><rect x="913" y="442" width="2" height="2"/><rect x="925" y="442" width="2" height="2"/><rect x="37" y="502" width="2" height="2"/><rect x="49" y="502" width="2" height="2"/><rect x="73" y="502" width="2" height="2"/><rect x="85" y="502" width="2" height="2"/><rect x="97" y="502" width="2" height="2"/><rect x="109" y="502" width="2" height="2"/><rect x="133" y="502" width="2" height="2"/><rect x="145" y="502" width="2" height="2"/><rect x="157" y="502" width="2" height="2"/><rect x="169" y="502" width="2" height="2"/><rect x="193" y="502" width="2" height="2"/><rect x="205" y="502" width="2" height="2"/><rect x="217" y="502" width="2" height="2"/><rect x="229" y="502" width="2" height="2"/><rect x="253" y="502" width="2" height="2"/><rect x="265" y="502" width="2" height="2"/><rect x="277" y="502" width="2" height="2"/><rect x="289" y="502" width="2" height="2"/><rect x="313" y="502" width="2" height="2"/><rect x="325" y="502" width="2" height="2"/><rect x="337" y="502" width="2" height="2"/><rect x="349" y="502" width="2" height="2"/><rect x="373" y="502" width="2" height="2"/><rect x="385" y="502" width="2" height="2"/><rect x="397" y="502" width="2" height="2"/><rect x="409" y="502" width="2" height="2"/><rect x="433" y="502" width="2" height="2"/><rect x="445" y="502" width="2" height="2"/><rect x="457" y="502" width="2" height="2"/><rect x="469" y="502" width="2" height="2"/><rect x="493" y="502" width="2" height="2"/><rect x="505" y="502" width="2" height="2"/><rect x="517" y="502" width="2" height="2"/><rect x="529" y="502" width="2" height="2"/><rect x="553" y="502" width="2" height="2"/><rect x="565" y="502" width="2" height="2"/><rect x="577" y="502" width="2" height="2"/><rect x="589" y="502" width="2" height="2"/><rect x="613" y="502" width="2" height="2"/><rect x="625" y="502" width="2" height="2"/><rect x="637" y="502" width="2" height="2"/><rect x="649" y="502" width="2" height="2"/><rect x="673" y="502" width="2" height="2"/><rect x="685" y="502" width="2" height="2"/><rect x="697" y="502" width="2" height="2"/><rect x="709" y="502" width="2" height="2"/><rect x="733" y="502" width="2" height="2"/><rect x="745" y="502" width="2" height="2"/><rect x="757" y="502" width="2" height="2"/><rect x="769" y="502" width="2" height="2"/><rect x="793" y="502" width="2" height="2"/><rect x="805" y="502" width="2" height="2"/><rect x="817" y="502" width="2" height="2"/><rect x="829" y="502" width="2" height="2"/><rect x="853" y="502" width="2" height="2"/><rect x="865" y="502" width="2" height="2"/><rect x="877" y="502" width="2" height="2"/><rect x="889" y="502" width="2" height="2"/><rect x="913" y="502" width="2" height="2"/><rect x="925" y="502" width="2" height="2"/><rect x="37" y="562" width="2" height="2"/><rect x="49" y="562" width="2" height="2"/><rect x="73" y="562" width="2" height="2"/><rect x="85" y="562" width="2" height="2"/><rect x="97" y="562" width="2" height="2"/><rect x="109" y="562" width="2" height="2"/><rect x="133" y="562" width="2" height="2"/><rect x="145" y="562" width="2" height="2"/><rect x="157" y="562" width="2" height="2"/><rect x="169" y="562" width="2" height="2"/><rect x="193" y="562" width="2" height="2"/><rect x="205" y="562" width="2" height="2"/><rect x="217" y="562" width="2" height="2"/><rect x="229" y="562" width="2" height="2"/><rect x="253" y="562" width="2" height="2"/><rect x="265" y="562" width="2" height="2"/><rect x="277" y="562" width="2" height="2"/><rect x="289" y="562" width="2" height="2"/><rect x="313" y="562" width="2" height="2"/><rect x="325" y="562" width="2" height="2"/><rect x="337" y="562" width="2" height="2"/><rect x="349" y="562" width="2" height="2"/><rect x="373" y="562" width="2" height="2"/><rect x="385" y="562" width="2" height="2"/><rect x="397" y="562" width="2" height="2"/><rect x="409" y="562" width="2" height="2"/><rect x="433" y="562" width="2" height="2"/><rect x="445" y="562" width="2" height="2"/><rect x="457" y="562" width="2" height="2"/><rect x="469" y="562" width="2" height="2"/><rect x="493" y="562" width="2" height="2"/><rect x="505" y="562" width="2" height="2"/><rect x="517" y="562" width="2" height="2"/><rect x="529" y="562" width="2" height="2"/><rect x="553" y="562" width="2" height="2"/><rect x="565" y="562" width="2" height="2"/><rect x="577" y="562" width="2" height="2"/><rect x="589" y="562" width="2" height="2"/><rect x="613" y="562" width="2" height="2"/><rect x="625" y="562" width="2" height="2"/><rect x="637" y="562" width="2" height="2"/><rect x="649" y="562" width="2" height="2"/><rect x="673" y="562" width="2" height="2"/><rect x="685" y="562" width="2" height="2"/><rect x="697" y="562" width="2" height="2"/><rect x="709" y="562" width="2" height="2"/><rect x="733" y="562" width="2" height="2"/><rect x="745" y="562" width="2" height="2"/><rect x="757" y="562" width="2" height="2"/><rect x="769" y="562" width="2" height="2"/><rect x="793" y="562" width="2" height="2"/><rect x="805" y="562" width="2" height="2"/><rect x="817" y="562" width="2" height="2"/><rect x="829" y="562" width="2" height="2"/><rect x="853" y="562" width="2" height="2"/><rect x="865" y="562" width="2" height="2"/><rect x="877" y="562" width="2" height="2"/><rect x="889" y="562" width="2" height="2"/><rect x="913" y="562" width="2" height="2"/><rect x="925" y="562" width="2" height="2"/></g>
  <g fill="#dcdcdc"><rect x="480" y="34.2" width="4" height="1.6"/><rect x="480" y="46.2" width="4" height="1.6"/><rect x="480" y="58.2" width="4" height="1.6"/><rect x="480" y="70.2" width="4" height="1.6"/><rect x="480" y="82.2" width="4" height="1.6"/><rect x="480" y="94.2" width="4" height="1.6"/><rect x="480" y="106.2" width="4" height="1.6"/><rect x="480" y="118.2" width="4" height="1.6"/><rect x="480" y="130.2" width="4" height="1.6"/><rect x="480" y="142.2" width="4" height="1.6"/><rect x="480" y="154.2" width="4" height="1.6"/><rect x="480" y="166.2" width="4" height="1.6"/><rect x="480" y="178.2" width="4" height="1.6"/><rect x="480" y="190.2" width="4" height="1.6"/><rect x="480" y="202.2" width="4" height="1.6"/><rect x="480" y="214.2" width="4" height="1.6"/><rect x="480" y="226.2" width="4" height="1.6"/><rect x="480" y="238.2" width="4" height="1.6"/><rect x="480" y="250.2" width="4" height="1.6"/><rect x="480" y="262.2" width="4" height="1.6"/><rect x="480" y="274.2" width="4" height="1.6"/><rect x="480" y="286.2" width="4" height="1.6"/><rect x="480" y="298.2" width="4" height="1.6"/><rect x="480" y="310.2" width="4" height="1.6"/><rect x="480" y="334.2" width="4" height="1.6"/><rect x="480" y="346.2" width="4" height="1.6"/><rect x="480" y="358.2" width="4" height="1.6"/><rect x="480" y="370.2" width="4" height="1.6"/><rect x="480" y="382.2" width="4" height="1.6"/><rect x="480" y="394.2" width="4" height="1.6"/><rect x="480" y="406.2" width="4" height="1.6"/><rect x="480" y="418.2" width="4" height="1.6"/><rect x="480" y="430.2" width="4" height="1.6"/><rect x="480" y="442.2" width="4" height="1.6"/><rect x="480" y="454.2" width="4" height="1.6"/><rect x="480" y="466.2" width="4" height="1.6"/><rect x="480" y="478.2" width="4" height="1.6"/><rect x="480" y="490.2" width="4" height="1.6"/><rect x="480" y="502.2" width="4" height="1.6"/><rect x="480" y="514.2" width="4" height="1.6"/><rect x="480" y="526.2" width="4" height="1.6"/><rect x="480" y="538.2" width="4" height="1.6"/><rect x="480" y="550.2" width="4" height="1.6"/><rect x="480" y="562.2" width="4" height="1.6"/><rect x="480" y="574.2" width="4" height="1.6"/><rect x="480" y="586.2" width="4" height="1.6"/><rect x="480" y="598.2" width="4" height="1.6"/><rect x="480" y="610.2" width="4" height="1.6"/><rect x="37.2" y="321" width="1.6" height="4"/><rect x="49.2" y="321" width="1.6" height="4"/><rect x="61.2" y="321" width="1.6" height="4"/><rect x="73.2" y="321" width="1.6" height="4"/><rect x="85.2" y="321" width="1.6" height="4"/><rect x="97.2" y="321" width="1.6" height="4"/><rect x="109.2" y="321" width="1.6" height="4"/><rect x="121.2" y="321" width="1.6" height="4"/><rect x="133.2" y="321" width="1.6" height="4"/><rect x="145.2" y="321" width="1.6" height="4"/><rect x="157.2" y="321" width="1.6" height="4"/><rect x="169.2" y="321" width="1.6" height="4"/><rect x="181.2" y="321" width="1.6" height="4"/><rect x="193.2" y="321" width="1.6" height="4"/><rect x="205.2" y="321" width="1.6" height="4"/><rect x="217.2" y="321" width="1.6" height="4"/><rect x="229.2" y="321" width="1.6" height="4"/><rect x="241.2" y="321" width="1.6" height="4"/><rect x="253.2" y="321" width="1.6" height="4"/><rect x="265.2" y="321" width="1.6" height="4"/><rect x="277.2" y="321" width="1.6" height="4"/><rect x="289.2" y="321" width="1.6" height="4"/><rect x="301.2" y="321" width="1.6" height="4"/><rect x="313.2" y="321" width="1.6" height="4"/><rect x="325.2" y="321" width="1.6" height="4"/><rect x="337.2" y="321" width="1.6" height="4"/><rect x="349.2" y="321" width="1.6" height="4"/><rect x="361.2" y="321" width="1.6" height="4"/><rect x="373.2" y="321" width="1.6" height="4"/><rect x="385.2" y="321" width="1.6" height="4"/><rect x="397.2" y="321" width="1.6" height="4"/><rect x="409.2" y="321" width="1.6" height="4"/><rect x="421.2" y="321" width="1.6" height="4"/><rect x="433.2" y="321" width="1.6" height="4"/><rect x="445.2" y="321" width="1.6" height="4"/><rect x="457.2" y="321" width="1.6" height="4"/><rect x="469.2" y="321" width="1.6" height="4"/><rect x="493.2" y="321" width="1.6" height="4"/><rect x="505.2" y="321" width="1.6" height="4"/><rect x="517.2" y="321" width="1.6" height="4"/><rect x="529.2" y="321" width="1.6" height="4"/><rect x="541.2" y="321" width="1.6" height="4"/><rect x="553.2" y="321" width="1.6" height="4"/><rect x="565.2" y="321" width="1.6" height="4"/><rect x="577.2" y="321" width="1.6" height="4"/><rect x="589.2" y="321" width="1.6" height="4"/><rect x="601.2" y="321" width="1.6" height="4"/><rect x="613.2" y="321" width="1.6" height="4"/><rect x="625.2" y="321" width="1.6" height="4"/><rect x="637.2" y="321" width="1.6" height="4"/><rect x="649.2" y="321" width="1.6" height="4"/><rect x="661.2" y="321" width="1.6" height="4"/><rect x="673.2" y="321" width="1.6" height="4"/><rect x="685.2" y="321" width="1.6" height="4"/><rect x="697.2" y="321" width="1.6" height="4"/><rect x="709.2" y="321" width="1.6" height="4"/><rect x="721.2" y="321" width="1.6" height="4"/><rect x="733.2" y="321" width="1.6" height="4"/><rect x="745.2" y="321" width="1.6" height="4"/><rect x="757.2" y="321" width="1.6" height="4"/><rect x="769.2" y="321" width="1.6" height="4"/><rect x="781.2" y="321" width="1.6" height="4"/><rect x="793.2" y="321" width="1.6" height="4"/><rect x="805.2" y="321" width="1.6" height="4"/><rect x="817.2" y="321" width="1.6" height="4"/><rect x="829.2" y="321" width="1.6" height="4"/><rect x="841.2" y="321" width="1.6" height="4"/><rect x="853.2" y="321" width="1.6" height="4"/><rect x="865.2" y="321" width="1.6" height="4"/><rect x="877.2" y="321" width="1.6" height="4"/><rect x="889.2" y="321" width="1.6" height="4"/><rect x="901.2" y="321" width="1.6" height="4"/><rect x="913.2" y="321" width="1.6" height="4"/><rect x="925.2" y="321" width="1.6" height="4"/><rect x="480" y="321" width="4" height="4"/><rect x="175" y="322.2" width="14" height="1.6"/><rect x="181.2" y="316" width="1.6" height="14"/><rect x="775" y="322.2" width="14" height="1.6"/><rect x="781.2" y="316" width="1.6" height="14"/></g>
  <g fill="#f4f4f4"><rect x="37" y="25" width="2" height="3"/><rect x="37" y="618" width="2" height="3"/><rect x="49" y="25" width="2" height="3"/><rect x="49" y="618" width="2" height="3"/><rect x="61" y="25" width="2" height="6"/><rect x="61" y="615" width="2" height="6"/><rect x="73" y="25" width="2" height="3"/><rect x="73" y="618" width="2" height="3"/><rect x="85" y="25" width="2" height="3"/><rect x="85" y="618" width="2" height="3"/><rect x="97" y="25" width="2" height="3"/><rect x="97" y="618" width="2" height="3"/><rect x="109" y="25" width="2" height="3"/><rect x="109" y="618" width="2" height="3"/><rect x="121" y="25" width="2" height="6"/><rect x="121" y="615" width="2" height="6"/><rect x="133" y="25" width="2" height="3"/><rect x="133" y="618" width="2" height="3"/><rect x="145" y="25" width="2" height="3"/><rect x="145" y="618" width="2" height="3"/><rect x="157" y="25" width="2" height="3"/><rect x="157" y="618" width="2" height="3"/><rect x="169" y="25" width="2" height="3"/><rect x="169" y="618" width="2" height="3"/><rect x="181" y="25" width="2" height="6"/><rect x="181" y="615" width="2" height="6"/><rect x="193" y="25" width="2" height="3"/><rect x="193" y="618" width="2" height="3"/><rect x="205" y="25" width="2" height="3"/><rect x="205" y="618" width="2" height="3"/><rect x="217" y="25" width="2" height="3"/><rect x="217" y="618" width="2" height="3"/><rect x="229" y="25" width="2" height="3"/><rect x="229" y="618" width="2" height="3"/><rect x="241" y="25" width="2" height="6"/><rect x="241" y="615" width="2" height="6"/><rect x="253" y="25" width="2" height="3"/><rect x="253" y="618" width="2" height="3"/><rect x="265" y="25" width="2" height="3"/><rect x="265" y="618" width="2" height="3"/><rect x="277" y="25" width="2" height="3"/><rect x="277" y="618" width="2" height="3"/><rect x="289" y="25" width="2" height="3"/><rect x="289" y="618" width="2" height="3"/><rect x="301" y="25" width="2" height="6"/><rect x="301" y="615" width="2" height="6"/><rect x="313" y="25" width="2" height="3"/><rect x="313" y="618" width="2" height="3"/><rect x="325" y="25" width="2" height="3"/><rect x="325" y="618" width="2" height="3"/><rect x="337" y="25" width="2" height="3"/><rect x="337" y="618" width="2" height="3"/><rect x="349" y="25" width="2" height="3"/><rect x="349" y="618" width="2" height="3"/><rect x="361" y="25" width="2" height="6"/><rect x="361" y="615" width="2" height="6"/><rect x="373" y="25" width="2" height="3"/><rect x="373" y="618" width="2" height="3"/><rect x="385" y="25" width="2" height="3"/><rect x="385" y="618" width="2" height="3"/><rect x="397" y="25" width="2" height="3"/><rect x="397" y="618" width="2" height="3"/><rect x="409" y="25" width="2" height="3"/><rect x="409" y="618" width="2" height="3"/><rect x="421" y="25" width="2" height="6"/><rect x="421" y="615" width="2" height="6"/><rect x="433" y="25" width="2" height="3"/><rect x="433" y="618" width="2" height="3"/><rect x="445" y="25" width="2" height="3"/><rect x="445" y="618" width="2" height="3"/><rect x="457" y="25" width="2" height="3"/><rect x="457" y="618" width="2" height="3"/><rect x="469" y="25" width="2" height="3"/><rect x="469" y="618" width="2" height="3"/><rect x="481" y="25" width="2" height="6"/><rect x="481" y="615" width="2" height="6"/><rect x="493" y="25" width="2" height="3"/><rect x="493" y="618" width="2" height="3"/><rect x="505" y="25" width="2" height="3"/><rect x="505" y="618" width="2" height="3"/><rect x="517" y="25" width="2" height="3"/><rect x="517" y="618" width="2" height="3"/><rect x="529" y="25" width="2" height="3"/><rect x="529" y="618" width="2" height="3"/><rect x="541" y="25" width="2" height="6"/><rect x="541" y="615" width="2" height="6"/><rect x="553" y="25" width="2" height="3"/><rect x="553" y="618" width="2" height="3"/><rect x="565" y="25" width="2" height="3"/><rect x="565" y="618" width="2" height="3"/><rect x="577" y="25" width="2" height="3"/><rect x="577" y="618" width="2" height="3"/><rect x="589" y="25" width="2" height="3"/><rect x="589" y="618" width="2" height="3"/><rect x="601" y="25" width="2" height="6"/><rect x="601" y="615" width="2" height="6"/><rect x="613" y="25" width="2" height="3"/><rect x="613" y="618" width="2" height="3"/><rect x="625" y="25" width="2" height="3"/><rect x="625" y="618" width="2" height="3"/><rect x="637" y="25" width="2" height="3"/><rect x="637" y="618" width="2" height="3"/><rect x="649" y="25" width="2" height="3"/><rect x="649" y="618" width="2" height="3"/><rect x="661" y="25" width="2" height="6"/><rect x="661" y="615" width="2" height="6"/><rect x="673" y="25" width="2" height="3"/><rect x="673" y="618" width="2" height="3"/><rect x="685" y="25" width="2" height="3"/><rect x="685" y="618" width="2" height="3"/><rect x="697" y="25" width="2" height="3"/><rect x="697" y="618" width="2" height="3"/><rect x="709" y="25" width="2" height="3"/><rect x="709" y="618" width="2" height="3"/><rect x="721" y="25" width="2" height="6"/><rect x="721" y="615" width="2" height="6"/><rect x="733" y="25" width="2" height="3"/><rect x="733" y="618" width="2" height="3"/><rect x="745" y="25" width="2" height="3"/><rect x="745" y="618" width="2" height="3"/><rect x="757" y="25" width="2" height="3"/><rect x="757" y="618" width="2" height="3"/><rect x="769" y="25" width="2" height="3"/><rect x="769" y="618" width="2" height="3"/><rect x="781" y="25" width="2" height="6"/><rect x="781" y="615" width="2" height="6"/><rect x="793" y="25" width="2" height="3"/><rect x="793" y="618" width="2" height="3"/><rect x="805" y="25" width="2" height="3"/><rect x="805" y="618" width="2" height="3"/><rect x="817" y="25" width="2" height="3"/><rect x="817" y="618" width="2" height="3"/><rect x="829" y="25" width="2" height="3"/><rect x="829" y="618" width="2" height="3"/><rect x="841" y="25" width="2" height="6"/><rect x="841" y="615" width="2" height="6"/><rect x="853" y="25" width="2" height="3"/><rect x="853" y="618" width="2" height="3"/><rect x="865" y="25" width="2" height="3"/><rect x="865" y="618" width="2" height="3"/><rect x="877" y="25" width="2" height="3"/><rect x="877" y="618" width="2" height="3"/><rect x="889" y="25" width="2" height="3"/><rect x="889" y="618" width="2" height="3"/><rect x="901" y="25" width="2" height="6"/><rect x="901" y="615" width="2" height="6"/><rect x="913" y="25" width="2" height="3"/><rect x="913" y="618" width="2" height="3"/><rect x="925" y="25" width="2" height="3"/><rect x="925" y="618" width="2" height="3"/><rect x="26" y="34" width="4" height="2"/><rect x="930" y="34" width="4" height="2"/><rect x="26" y="46" width="4" height="2"/><rect x="930" y="46" width="4" height="2"/><rect x="26" y="58" width="4" height="2"/><rect x="930" y="58" width="4" height="2"/><rect x="26" y="70" width="4" height="2"/><rect x="930" y="70" width="4" height="2"/><rect x="26" y="82" width="7" height="2"/><rect x="927" y="82" width="7" height="2"/><rect x="26" y="94" width="4" height="2"/><rect x="930" y="94" width="4" height="2"/><rect x="26" y="106" width="4" height="2"/><rect x="930" y="106" width="4" height="2"/><rect x="26" y="118" width="4" height="2"/><rect x="930" y="118" width="4" height="2"/><rect x="26" y="130" width="4" height="2"/><rect x="930" y="130" width="4" height="2"/><rect x="26" y="142" width="7" height="2"/><rect x="927" y="142" width="7" height="2"/><rect x="26" y="154" width="4" height="2"/><rect x="930" y="154" width="4" height="2"/><rect x="26" y="166" width="4" height="2"/><rect x="930" y="166" width="4" height="2"/><rect x="26" y="178" width="4" height="2"/><rect x="930" y="178" width="4" height="2"/><rect x="26" y="190" width="4" height="2"/><rect x="930" y="190" width="4" height="2"/><rect x="26" y="202" width="7" height="2"/><rect x="927" y="202" width="7" height="2"/><rect x="26" y="214" width="4" height="2"/><rect x="930" y="214" width="4" height="2"/><rect x="26" y="226" width="4" height="2"/><rect x="930" y="226" width="4" height="2"/><rect x="26" y="238" width="4" height="2"/><rect x="930" y="238" width="4" height="2"/><rect x="26" y="250" width="4" height="2"/><rect x="930" y="250" width="4" height="2"/><rect x="26" y="262" width="7" height="2"/><rect x="927" y="262" width="7" height="2"/><rect x="26" y="274" width="4" height="2"/><rect x="930" y="274" width="4" height="2"/><rect x="26" y="286" width="4" height="2"/><rect x="930" y="286" width="4" height="2"/><rect x="26" y="298" width="4" height="2"/><rect x="930" y="298" width="4" height="2"/><rect x="26" y="310" width="4" height="2"/><rect x="930" y="310" width="4" height="2"/><rect x="26" y="322" width="7" height="2"/><rect x="927" y="322" width="7" height="2"/><rect x="26" y="334" width="4" height="2"/><rect x="930" y="334" width="4" height="2"/><rect x="26" y="346" width="4" height="2"/><rect x="930" y="346" width="4" height="2"/><rect x="26" y="358" width="4" height="2"/><rect x="930" y="358" width="4" height="2"/><rect x="26" y="370" width="4" height="2"/><rect x="930" y="370" width="4" height="2"/><rect x="26" y="382" width="7" height="2"/><rect x="927" y="382" width="7" height="2"/><rect x="26" y="394" width="4" height="2"/><rect x="930" y="394" width="4" height="2"/><rect x="26" y="406" width="4" height="2"/><rect x="930" y="406" width="4" height="2"/><rect x="26" y="418" width="4" height="2"/><rect x="930" y="418" width="4" height="2"/><rect x="26" y="430" width="4" height="2"/><rect x="930" y="430" width="4" height="2"/><rect x="26" y="442" width="7" height="2"/><rect x="927" y="442" width="7" height="2"/><rect x="26" y="454" width="4" height="2"/><rect x="930" y="454" width="4" height="2"/><rect x="26" y="466" width="4" height="2"/><rect x="930" y="466" width="4" height="2"/><rect x="26" y="478" width="4" height="2"/><rect x="930" y="478" width="4" height="2"/><rect x="26" y="490" width="4" height="2"/><rect x="930" y="490" width="4" height="2"/><rect x="26" y="502" width="7" height="2"/><rect x="927" y="502" width="7" height="2"/><rect x="26" y="514" width="4" height="2"/><rect x="930" y="514" width="4" height="2"/><rect x="26" y="526" width="4" height="2"/><rect x="930" y="526" width="4" height="2"/><rect x="26" y="538" width="4" height="2"/><rect x="930" y="538" width="4" height="2"/><rect x="26" y="550" width="4" height="2"/><rect x="930" y="550" width="4" height="2"/><rect x="26" y="562" width="7" height="2"/><rect x="927" y="562" width="7" height="2"/><rect x="26" y="574" width="4" height="2"/><rect x="930" y="574" width="4" height="2"/><rect x="26" y="586" width="4" height="2"/><rect x="930" y="586" width="4" height="2"/><rect x="26" y="598" width="4" height="2"/><rect x="930" y="598" width="4" height="2"/><rect x="26" y="610" width="4" height="2"/><rect x="930" y="610" width="4" height="2"/></g>
  <rect x="26" y="189" width="908" height="2.4" fill="#e8e800"/>
  <polyline points="26.0,186.6 30.0,186.4 31.5,192.5 34.5,192.2 36.0,186.6 37.5,192.0 39.0,186.4 41.5,192.0 45.5,192.1 48.0,187.6 50.0,191.9 53.0,188.3 55.0,188.4 57.0,191.3 59.5,186.9 62.5,186.7 65.0,191.4 69.0,191.2 71.5,188.0 74.5,193.4 76.0,187.6 79.0,191.6 80.5,188.8 83.5,191.3 85.5,191.2 88.5,187.6 90.5,192.3 93.5,192.6 96.5,186.2 98.5,185.9 100.5,193.5 103.0,188.8 104.5,191.8 107.5,188.1 110.5,193.4 113.5,193.4 115.0,186.2 116.5,191.3 119.0,188.8 120.5,192.4 123.5,186.7 126.5,192.4 130.5,192.3 132.0,186.6 135.0,186.6 137.0,191.7 139.5,188.4 141.5,192.3 143.5,187.8 145.0,192.3 149.0,192.6 152.0,188.6 155.0,188.4 156.5,191.5 160.5,191.8 162.0,188.2 163.5,193.5 165.5,186.7 169.5,186.7 172.5,193.3 174.0,187.7 176.0,192.1 178.5,187.7 182.5,187.8 184.5,191.8 186.5,186.5 189.0,191.6 193.0,191.5 196.0,188.4 198.0,191.9 201.0,192.1 202.5,186.2 204.0,192.0 207.0,186.5 210.0,186.3 211.5,191.9 213.0,188.1 215.0,192.2 218.0,186.5 220.5,192.5 223.5,192.3 225.0,188.0 228.0,191.3 230.0,188.8 232.5,192.4 234.5,192.4 237.5,187.7 241.5,187.7 244.5,191.7 248.5,191.6 251.0,188.3 254.0,188.3 256.5,194.0 258.0,186.8 260.0,187.0 262.5,191.8 265.5,186.1 268.5,192.5 270.5,192.6 272.0,186.3 274.0,186.2 277.0,192.5 281.0,192.6 282.5,186.2 285.0,191.9 287.0,187.9 288.5,191.2 290.5,186.5 293.5,192.1 296.0,188.5 300.0,188.6 302.0,191.8 304.0,191.5 306.5,186.6 309.0,192.0 311.0,191.8 314.0,187.5 318.0,187.4 319.5,192.6 321.0,186.3 323.0,193.4 326.0,193.5 329.0,187.5 333.0,187.8 335.0,192.1 338.0,188.6 340.5,192.2 344.5,192.4 347.5,188.5 351.5,188.7 353.0,192.4 355.0,186.6 358.0,192.4 360.0,186.7 361.5,193.8 363.5,194.0 365.5,186.7 368.5,193.9 370.5,194.0 372.5,186.3 375.0,192.1 378.0,187.9 381.0,191.6 384.0,188.6 386.5,192.6 389.5,192.3 392.5,188.9 394.5,193.8 397.5,193.6 400.0,188.7 403.0,188.7 405.0,191.2 407.5,188.5 409.0,193.8 410.5,186.1 413.0,191.7 414.5,188.0 416.5,187.9 418.0,192.4 420.0,188.9 423.0,189.0 426.0,192.4 428.0,186.7 430.0,192.1 434.0,191.9 437.0,186.3 439.5,191.8 442.5,187.7 446.5,187.9 449.5,192.0 452.5,191.9 454.5,186.5 457.5,186.4 459.5,192.4 462.5,186.3 465.5,191.6 469.5,191.6 471.5,187.6 474.5,191.8 476.0,187.7 479.0,192.6 483.0,192.8 486.0,186.2 487.5,192.5 490.5,187.6 492.5,187.5 494.0,192.1 497.0,192.1 500.0,186.2 502.0,191.7 503.5,188.3 506.5,188.3 508.5,191.9 511.5,192.0 514.0,186.8 515.5,191.6 517.5,188.2 520.0,192.2 521.5,187.8 523.5,187.6 525.5,191.6 529.5,191.6 531.5,188.8 533.0,192.5 535.0,187.5 536.5,191.5 539.0,188.5 541.5,191.5 544.5,187.5 547.0,192.6 549.0,192.4 551.5,188.1 553.5,191.7 556.5,191.5 559.5,187.8 562.0,191.7 565.0,191.6 568.0,186.2 570.5,193.7 573.0,188.8 577.0,189.0 579.5,191.6 581.0,186.5 584.0,192.3 586.0,186.7 588.0,192.1 591.0,192.2 592.5,188.2 595.5,188.0 597.0,191.9 600.0,192.1 601.5,186.2 604.5,191.4 606.5,188.5 608.0,192.3 611.0,192.2 613.5,186.3 617.5,186.1 619.0,191.8 621.0,186.5 623.0,186.5 625.0,192.4 628.0,192.2 629.5,187.8 631.0,191.7 633.5,188.6 637.5,188.6 640.0,191.5 642.0,191.8 643.5,188.3 645.5,188.5 648.5,192.1 650.5,191.9 653.5,186.2 655.5,193.3 658.5,188.9 660.0,191.6 663.0,187.5 665.0,191.7 668.0,188.8 671.0,192.0 673.0,187.5 676.0,191.3 678.0,186.5 679.5,191.7 681.5,187.9 684.5,187.8 687.5,191.3 689.5,188.4 691.5,192.4 694.5,192.6 696.5,186.3 698.5,191.3 700.0,188.4 703.0,192.0 706.0,191.9 708.0,188.1 711.0,194.0 714.0,188.6 716.0,192.3 719.0,192.3 720.5,188.6 722.0,193.8 723.5,187.6 725.5,193.7 727.0,187.8 729.0,192.2 732.0,192.2 734.5,187.7 737.5,187.5 740.5,191.5 743.0,186.4 745.5,192.2 748.5,191.9 750.0,188.4 751.5,191.6 754.0,187.9 756.5,193.4 758.0,187.9 762.0,188.2 764.5,192.2 767.5,192.3 770.5,188.1 773.5,187.9 775.0,193.5 778.0,193.5 781.0,188.3 785.0,188.5 787.0,191.4 789.0,191.4 790.5,188.4 793.5,192.3 797.5,192.6 800.5,188.3 802.5,193.6 804.5,187.7 808.5,187.8 810.5,191.4 813.5,186.3 815.5,186.6 818.5,193.9 821.5,187.6 823.5,187.5 825.0,191.4 827.5,186.5 830.0,191.6 831.5,186.3 835.5,186.1 837.5,192.2 840.0,188.3 843.0,191.9 845.0,191.8 847.0,188.3 851.0,188.3 853.0,193.3 855.5,188.9 857.5,189.0 859.0,192.2 863.0,192.3 865.0,188.6 866.5,192.4 869.5,186.2 873.5,185.9 876.0,191.9 878.0,187.9 881.0,187.8 883.5,191.3 886.5,188.7 889.5,188.4 891.0,191.7 893.0,188.5 895.5,193.4 897.0,187.5 899.0,192.6 901.5,186.8 903.5,193.7 907.5,193.7 909.0,188.4 912.0,192.4 913.5,188.0 915.5,191.7 918.5,191.5 920.0,188.0 923.0,188.1 925.5,191.4 927.5,187.7 929.5,191.9 931.5,188.5 934.0,191.4 934.0,191.7" fill="none" stroke="#f0f000" stroke-width="2.3" stroke-linejoin="round"/>
  <!-- top-left trigger marker -->
  <path d="M24.8 24.6 H33 V36.2 L29.6 39.6 H24.8 Z" fill="#080010" stroke="#8a34d8" stroke-width="1.6"/>
  <rect x="24.6" y="28.6" width="7.6" height="1.8" fill="#c040f0"/>
  <rect x="24.6" y="28.6" width="1.8" height="8.8" fill="#c040f0"/>
  <!-- left ch2 marker -->
  <path d="M0.8 313.5 H17 L24.5 323.5 L17 333.5 H0.8 Z" fill="#000" stroke="#bce640" stroke-width="1.6"/>
  <!-- right trigger level marker -->
  <path d="M937 323 L952 317 L952 329.5 Z" fill="#c020e0"/>
  <path d="M925 320.5 L928 323 L925 325.5 Z" fill="#f0f0f0"/>
  <rect x="928" y="322" width="6" height="2" fill="#e0a0c0"/>
</svg>


<!-- bottom left panels -->
<div class="a" style="left:0;top:623px;width:383px;height:97px;background:#74bcd0"></div>
<div class="a" style="left:1px;top:646px;width:250px;height:2px;background:#4a8898"></div>
<div class="box" style="left:1px;top:623px;width:249px;height:24px"></div>
<div class="box" style="left:1px;top:647.5px;width:249px;height:22.7px"></div>
<div class="box" style="left:253.5px;top:623px;width:126.5px;height:46.5px;border-radius:4px"></div>
<div class="box" style="left:1px;top:673px;width:379px;height:43px"></div>

<svg class="a" style="left:0;top:620px" width="383" height="100">
  <circle cx="12.2" cy="16" r="9.5" fill="#e80000"/>
  <path d="M8.8 12.2 L12.6 9 H15 V22.5 H12.3 V12.8 L10 14.6 Z" fill="#000"/>
  <circle cx="12" cy="40" r="9.5" fill="#f0e800"/>
  <circle cx="11.2" cy="64" r="9.5" fill="#f0e800"/>
  <circle cx="11.2" cy="86.7" r="9.5" fill="#f0e800"/>
  <circle cx="201.9" cy="64" r="9.5" fill="#f0e800"/>
  <circle cx="201.9" cy="86.7" r="9.5" fill="#f0e800"/>
</svg>
<div class="a" style="left:3px;top:651px;width:19px;text-align:center;font:bold 18px/19px 'Liberation Sans',sans-serif;color:#000">2</div>
<div class="a" style="left:2px;top:675px;width:19px;text-align:center;font:bold 18px/19px 'Liberation Sans',sans-serif;color:#000">2</div>
<div class="a" style="left:2px;top:697px;width:19px;text-align:center;font:bold 18px/19px 'Liberation Sans',sans-serif;color:#000">2</div>
<div class="a" style="left:192px;top:675px;width:19px;text-align:center;font:bold 18px/19px 'Liberation Sans',sans-serif;color:#000">2</div>
<div class="a" style="left:192px;top:697px;width:19px;text-align:center;font:bold 18px/19px 'Liberation Sans',sans-serif;color:#000">2</div>




<!-- menu area -->
<div class="a" style="left:383px;top:645px;width:575px;height:72.5px;background:#0361a0"></div>
<div class="pill" style="left:383px;top:624px;width:119px;height:21px;border-radius:10.5px"></div>

<div class="pill" style="left:799px;top:623px;width:154px;height:22px"></div>
<svg class="a" style="left:790px;top:620px" width="60" height="26">
  <circle cx="20.4" cy="14.6" r="10" fill="#f0e800"/>
  <path d="M32 22.5 H42.5 L47.5 6.7 H55.5" stroke="#e8e8e8" stroke-width="1.3" fill="none"/>
</svg>
<div class="a" style="left:801px;top:625px;width:20px;text-align:center;font:bold 18px/20px 'Liberation Sans',sans-serif;color:#000">2</div>

<div class="btn" style="left:387px;top:649px;width:108px;height:67.7px"></div>
<div class="a" style="left:409px;top:685px;width:60px;height:24px;background:#e8e8e8"></div>

<div class="btn" style="left:717px;top:649px;width:107px;height:67.7px"></div>
<div class="a" style="left:745px;top:673px;font-family:'Liberation Sans',sans-serif;font-size:17px;line-height:19px;letter-spacing:2.4px;-webkit-text-stroke:0.3px #002870;transform:scaleX(1.04);transform-origin:0 0;color:#002870;white-space:pre">Save</div>
<div class="m" style="left:28px;top:4.5px;font:normal 18px/19px 'Liberation Serif',serif;color:#0a1e50;-webkit-text-stroke:0.5px #0a1e50;"><span style="width:12.0px;transform:scaleX(0.831)">A</span><span style="width:12.0px;transform:scaleX(0.831)">K</span><span style="width:12.0px;transform:scaleX(0.982)">T</span><span style="width:12.0px;transform:scaleX(0.831)">A</span><span style="width:12.0px;transform:scaleX(0.831)">K</span><span style="width:12.0px;transform:scaleX(0.831)">O</span><span style="width:12.0px;transform:scaleX(0.675)">M</span></div>
<div class="m" style="left:167px;top:3.2px;font:normal 18px/19px 'Liberation Serif',serif;color:#5a0000;-webkit-text-stroke:0.5px #5a0000;"><span style="width:12.0px">S</span><span style="width:12.0px;transform:scaleX(1.500)">t</span><span style="width:12.0px;transform:scaleX(1.022)">o</span><span style="width:12.0px;transform:scaleX(1.022)">p</span></div>
<div class="m" style="left:693.5px;top:4.4px;font:normal 18px/19px 'Liberation Serif',serif;color:#f0f0f0;-webkit-text-stroke:0.35px #f0f0f0;"><span style="width:12.0px">2</span><span style="width:12.0px">4</span><span style="width:12.0px">0</span><span style="width:12.0px">.</span><span style="width:12.0px">0</span><span style="width:12.0px;transform:scaleX(0.700)">m</span><span style="width:12.0px;transform:scaleX(1.313)">s</span></div>
<div class="m" style="left:830.6px;top:3.4px;font:normal 18px/19px 'Liberation Serif',serif;color:#f0f0f0;-webkit-text-stroke:0.35px #f0f0f0;"><span style="width:12.0px">5</span><span style="width:12.0px">:</span><span style="width:12.0px">4</span><span style="width:12.0px">8</span></div>
<div class="m" style="left:20.75px;top:629px;font:normal 18px/19px 'Liberation Serif',serif;color:#d01818;-webkit-text-stroke:0.35px #d01818;"><span style="width:12.0px">5</span><span style="width:12.0px">0</span><span style="width:12.0px">.</span><span style="width:12.0px">0</span><span style="width:12.0px;transform:scaleX(0.700)">m</span><span style="width:12.0px;transform:scaleX(0.831)">V</span><span style="width:12.0px">-</span></div>
<div class="m" style="left:125.8px;top:629px;font:normal 18px/19px 'Liberation Serif',serif;color:#d01818;-webkit-text-stroke:0.35px #d01818;"><span style="width:12.0px">0</span><span style="width:12.0px">.</span><span style="width:12.0px">0</span><span style="width:12.0px">0</span><span style="width:12.0px;transform:scaleX(1.022)">d</span><span style="width:12.0px">i</span><span style="width:12.0px;transform:scaleX(1.022)">v</span></div>
<div class="m" style="left:20px;top:652.5px;font:normal 18px/19px 'Liberation Serif',serif;color:#d8d820;-webkit-text-stroke:0.35px #d8d820;"><span style="width:12.0px">2</span><span style="width:12.0px;transform:scaleX(0.831)">V</span><span style="width:12.0px">-</span></div>
<div class="m" style="left:125.8px;top:652.5px;font:normal 18px/19px 'Liberation Serif',serif;color:#d8d820;-webkit-text-stroke:0.35px #d8d820;"><span style="width:12.0px">0</span><span style="width:12.0px">.</span><span style="width:12.0px">0</span><span style="width:12.0px">0</span><span style="width:12.0px;transform:scaleX(1.022)">d</span><span style="width:12.0px">i</span><span style="width:12.0px;transform:scaleX(1.022)">v</span></div>
<div class="m" style="left:268px;top:625.8px;font:normal 18px/19px 'Liberation Serif',serif;color:#e0e0e0;-webkit-text-stroke:0.35px #e0e0e0;"><span style="width:11.9px">(</span><span style="width:11.9px">5</span><span style="width:11.9px">0</span><span style="width:11.9px;transform:scaleX(0.831)">K</span><span style="width:11.9px">S</span><span style="width:11.9px">/</span><span style="width:11.9px;transform:scaleX(1.313)">s</span><span style="width:11.9px">)</span></div>
<div class="m" style="left:262px;top:649.2px;font:normal 18px/19px 'Liberation Serif',serif;color:#e0e0e0;-webkit-text-stroke:0.35px #e0e0e0;"><span style="width:11.9px;transform:scaleX(0.831)">D</span><span style="width:11.9px;transform:scaleX(1.152)">e</span><span style="width:11.9px;transform:scaleX(1.022)">p</span><span style="width:11.9px;transform:scaleX(1.500)">t</span><span style="width:11.9px;transform:scaleX(1.022)">h</span><span style="width:11.9px">:</span><span style="width:11.9px">1</span><span style="width:11.9px">0</span><span style="width:11.9px;transform:scaleX(0.831)">K</span></div>
<div class="m" style="left:24.2px;top:675.4px;font:normal 18px/19px 'Liberation Serif',serif;color:#d8d820;-webkit-text-stroke:0.35px #d8d820;"><span style="width:12.2px">F</span><span style="width:12.2px">:</span><span style="width:12.2px"> </span><span style="width:12.2px"> </span><span style="width:12.2px">?</span></div>
<div class="m" style="left:24.5px;top:697.8px;font:normal 18px/19px 'Liberation Serif',serif;color:#d8d820;-webkit-text-stroke:0.35px #d8d820;"><span style="width:12.2px">+</span><span style="width:12.2px;transform:scaleX(0.831)">D</span><span style="width:12.2px">:</span><span style="width:12.2px"> </span><span style="width:12.2px"> </span><span style="width:12.2px">?</span></div>
<div class="m" style="left:216px;top:675.4px;font:normal 18px/19px 'Liberation Serif',serif;color:#d8d820;-webkit-text-stroke:0.35px #d8d820;"><span style="width:12.2px;transform:scaleX(0.831)">V</span><span style="width:12.2px;transform:scaleX(1.022)">k</span><span style="width:12.2px">:</span><span style="width:12.2px">4</span><span style="width:12.2px">.</span><span style="width:12.2px">4</span><span style="width:12.2px">4</span><span style="width:12.2px">4</span><span style="width:12.2px;transform:scaleX(1.022)">v</span></div>
<div class="m" style="left:216px;top:697.8px;font:normal 18px/19px 'Liberation Serif',serif;color:#d8d820;-webkit-text-stroke:0.35px #d8d820;"><span style="width:12.2px;transform:scaleX(0.831)">V</span><span style="width:12.2px">:</span><span style="width:12.2px">4</span><span style="width:12.2px">.</span><span style="width:12.2px">4</span><span style="width:12.2px">4</span><span style="width:12.2px">4</span><span style="width:12.2px;transform:scaleX(1.022)">v</span></div>
<div class="m" style="left:404px;top:626.2px;font:normal 18px/19px 'Liberation Serif',serif;color:#e8e8e8;-webkit-text-stroke:0.35px #e8e8e8;"><span style="width:12.2px;transform:scaleX(0.675)">M</span><span style="width:12.2px">:</span><span style="width:12.2px">1</span><span style="width:12.2px">0</span><span style="width:12.2px;transform:scaleX(0.700)">m</span><span style="width:12.2px;transform:scaleX(1.313)">s</span></div>
<div class="m" style="left:847px;top:627.4px;font:normal 18px/19px 'Liberation Serif',serif;color:#e8e8e8;-webkit-text-stroke:0.35px #e8e8e8;"><span style="width:11.9px">0</span><span style="width:11.9px">.</span><span style="width:11.9px">0</span><span style="width:11.9px">0</span><span style="width:11.9px;transform:scaleX(0.700)">m</span><span style="width:11.9px;transform:scaleX(0.831)">V</span></div>
<div class="m" style="left:3.7px;top:315.4px;font:normal 19px/19px 'Liberation Serif',serif;color:#e0e838;-webkit-text-stroke:0.3px #e0e838;"><span style="width:12.0px">2</span></div>
<div class="m" style="left:414.5px;top:659px;font:normal 18px/19px 'Liberation Serif',serif;color:#002470;-webkit-text-stroke:0.85px #002470;"><span style="width:12.0px;transform:scaleX(0.982)">T</span><span style="width:12.0px;transform:scaleX(1.022)">y</span><span style="width:12.0px;transform:scaleX(1.022)">p</span><span style="width:12.0px;transform:scaleX(1.152)">e</span></div>
<div class="m" style="left:409px;top:688.6px;font:normal 18px/19px 'Liberation Serif',serif;color:#000000;-webkit-text-stroke:0.2px #000000;"><span style="width:12.0px">I</span><span style="width:12.0px;transform:scaleX(0.700)">m</span><span style="width:12.0px;transform:scaleX(1.152)">a</span><span style="width:12.0px;transform:scaleX(1.022)">g</span><span style="width:12.0px;transform:scaleX(1.152)">e</span></div>
</div></body></html>
